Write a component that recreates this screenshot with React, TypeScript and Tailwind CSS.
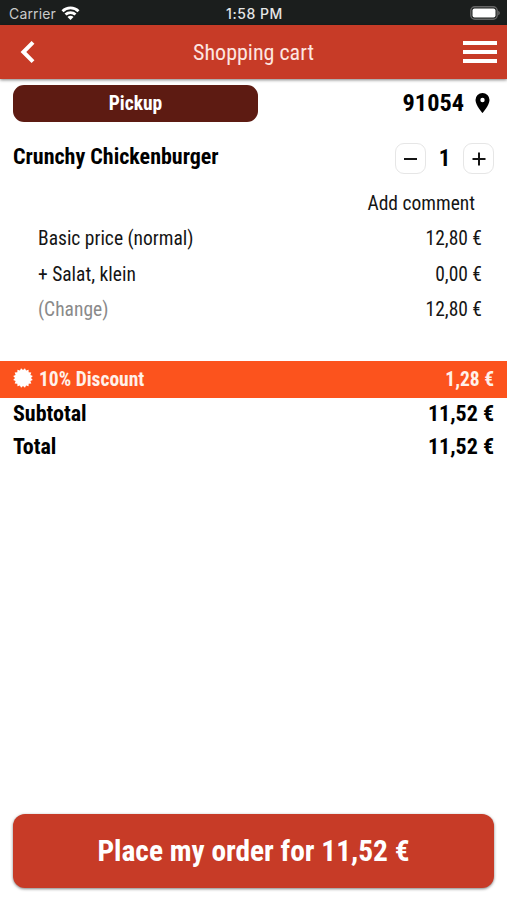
import React, { useState } from 'react';

const items = [
  { label: 'Basic price (normal)', price: '12,80 €', muted: false },
  { label: '+ Salat, klein', price: '0,00 €', muted: false },
  { label: '(Change)', price: '12,80 €', muted: true },
];

const totals = [
  { label: 'Subtotal', price: '11,52 €' },
  { label: 'Total', price: '11,52 €' },
];

// 16-pointed seal
const sealPoints = Array.from({ length: 32 }, (_, i) => {
  const r = i % 2 ? 8 : 10;
  const a = ((i + 1) * Math.PI) / 16;
  return `${(10 + r * Math.sin(a)).toFixed(2)},${(10 - r * Math.cos(a)).toFixed(2)}`;
}).join(' ');

const StatusBar: React.FC = () => (
  <div className="grid h-[25px] shrink-0 grid-cols-3 items-center bg-[#1b1e1d] pt-[2px] pl-[9px] pr-[7px] font-['Inter',sans-serif] text-[14px] leading-[20px] text-[#e6e6e6]">
    <div className="flex items-center gap-[5px]">
      <span className="tracking-[0.15px] text-[#c9cbca]">Carrier</span>
      <svg className="mb-[2px]" width="19" height="14" viewBox="0 0 18 14" fill="none" stroke="#fff" strokeWidth="2.8">
        <path d="M1 5.2a11.4 11.4 0 0 1 16 0" />
        <path d="M4 8.600a7.1 7.1 0 0 1 10 0" />
        <path d="M9 14 6 10.900a4.200 4.200 0 0 1 6 0z" fill="#fff" stroke="none" />
      </svg>
    </div>
    <span className="text-center font-medium tracking-[0.55px]">1:58 PM</span>
    <svg className="mb-[2px] justify-self-end" width="30" height="14" viewBox="0 0 30 14">
      <rect x="0.8" y="0.8" width="26.4" height="12.4" rx="4" fill="none" stroke="#666" strokeWidth="1.4" />
      <rect x="2.5" y="2.5" width="23" height="9" rx="2" fill="#fff" />
      <path d="M28.2 4.7c2.2.8 2.2 3.8 0 4.6z" fill="#666" />
    </svg>
  </div>
);

const Header: React.FC = () => (
  <div className="flex h-[54px] shrink-0 items-center justify-between bg-[#c73b27] pl-[20px] pr-[10px] text-white shadow-[0_1px_3px_rgba(0,0,0,0.5)]">
    <button className="w-[24px]" aria-label="Back">
      <svg width="16" height="22" viewBox="0 0 16 22" fill="none" stroke="#fff" strokeWidth="4">
        <path d="M13 1.4 3.4 11 13 20.6" />
      </svg>
    </button>
    <h1 className="text-[22px] text-[#fde6e0]">Shopping cart</h1>
    <button className="flex w-[34px] flex-col gap-[5px]" aria-label="Menu">
      <span className="h-[4px] w-full bg-white" />
      <span className="h-[4px] w-full bg-white" />
      <span className="h-[4px] w-full bg-white" />
    </button>
  </div>
);

const Stepper: React.FC = () => {
  const [count, setCount] = useState(1);

  return (
    <div className="flex items-center">
      <button
        aria-label="Less"
        onClick={() => setCount(Math.max(1, count - 1))}
        className="flex size-[31px] items-center justify-center rounded-[9px] border border-[#e6e6e6]"
      >
        <span className="h-[2px] w-[13px] bg-[#151515]" />
      </button>
      <span className="w-[37px] pt-[2px] text-center text-[23px] font-bold">{count}</span>
      <button
        aria-label="More"
        onClick={() => setCount(count + 1)}
        className="flex size-[31px] items-center justify-center rounded-[9px] border border-[#e6e6e6]"
      >
        <svg width="14" height="14" viewBox="0 0 14 14" stroke="#151515" strokeWidth="2">
          <path d="M0.500 7h13M7 0.500v13" />
        </svg>
      </button>
    </div>
  );
};

export default function App() {
  return (
    <div className="flex h-[900px] w-[507px] flex-col overflow-hidden bg-white font-['Roboto_Condensed','Roboto',sans-serif] text-black [font-stretch:75%]">
      <StatusBar />
      <Header />

      <div className="mt-[6px] flex h-[37px] items-center justify-between pl-[13px] pr-[17px]">
        <div className="flex h-[37px] w-[245px] items-center justify-center rounded-[11px] bg-[#5d1b12] text-[19.500px] font-bold text-white">
          Pickup
        </div>
        <div className="flex items-center gap-[11px] text-[24.300px] font-bold">
          <span>91054</span>
          <svg className="mb-[2px]" width="15" height="20" viewBox="0 0 14 20">
            <path fillRule="evenodd" d="M7 0a7 7 0 0 0-7 7c0 5.200 7 13 7 13s7-7.800 7-13a7 7 0 0 0-7-7zm0 9.200a2.200 2.200 0 1 1 0-4.400 2.200 2.200 0 0 1 0 4.400z" />
          </svg>
        </div>
      </div>

      <div className="mt-[21px] flex h-[31px] items-center justify-between px-[13px]">
        <h2 className="pb-[5px] text-[22px] font-bold">Crunchy Chickenburger</h2>
        <Stepper />
      </div>

      <div className="mt-[12px] flex flex-col pl-[38px] pr-[25px] text-[19.500px] leading-[35.300px] text-[#151515]">
        <button className="self-end pr-[7px]">Add comment</button>
        {items.map((item) => (
          <div key={item.label} className="flex justify-between">
            <span className={item.muted ? 'text-[#8a8a8a]' : ''}>{item.label}</span>
            <span>{item.price}</span>
          </div>
        ))}
      </div>

      <div className="mt-[33.800px] flex h-[37px] items-center justify-between bg-[#fc531d] px-[13px] text-[19.500px] font-bold text-[#fff1ea]">
        <div className="flex items-center gap-[6px]">
          <svg className="mb-[2px]" width="20" height="20" viewBox="0 0 20 20" fill="#fff">
            <polygon points={sealPoints} />
          </svg>
          <span>10% Discount</span>
        </div>
        <span>1,28 €</span>
      </div>

      <div className="-mt-px px-[13px] text-[22px] font-bold leading-[33px]">
        {totals.map((row) => (
          <div key={row.label} className="flex justify-between">
            <span>{row.label}</span>
            <span>{row.price}</span>
          </div>
        ))}
      </div>

      <button className="mx-[13px] mt-auto mb-[12px] h-[74px] rounded-[12px] bg-[#c73b27] text-[29.400px] font-bold text-white shadow-[0_1px_3px_rgba(0,0,0,0.5)]">
        Place my order for 11,52 €
      </button>
    </div>
  );
}
